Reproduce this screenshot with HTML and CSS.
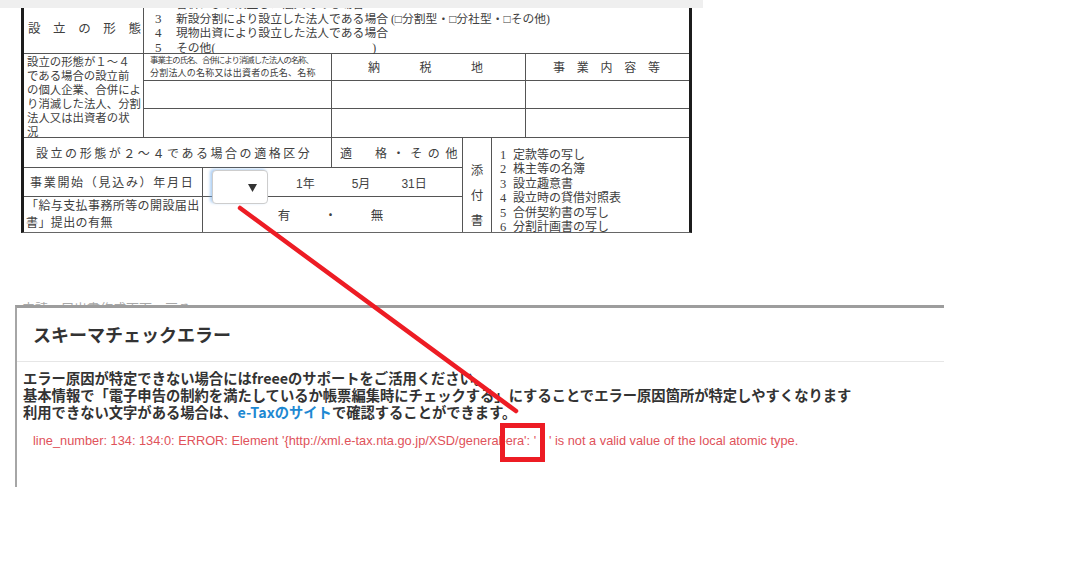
FILE: index.html
```html
<!DOCTYPE html>
<html lang="ja">
<head>
<meta charset="utf-8">
<title>スキーマチェックエラー</title>
<link rel="stylesheet" href="styles.css">
</head>
<body>
<div class="form-shot">
  <div class="strip"></div>
  <div class="form-clip">
    <div class="form">
      <div class="cell r1-label"><span>設</span><span>立</span><span>の</span><span>形</span><span>態</span></div>
      <div class="cell r1-content">
        <div><span class="n">2</span>合併により設立した法人である場合</div>
        <div><span class="n">3</span>新設分割により設立した法人である場合 (□分割型・□分社型・□その他)</div>
        <div><span class="n">4</span>現物出資により設立した法人である場合</div>
        <div><span class="n">5</span>その他(<span class="blank"></span>)</div>
      </div>

      <div class="cell r2-label">設立の形態が１～４<br>である場合の設立前<br>の個人企業、合併によ<br>り消滅した法人、分割<br>法人又は出資者の状<br>況</div>
      <div class="cell r2-h1"><div class="tiny1">事業主の氏名、合併により消滅した法人の名称、</div><div class="tiny2">分割法人の名称又は出資者の氏名、名称</div></div>
      <div class="cell r2-h2"><span>納</span><span>税</span><span>地</span></div>
      <div class="cell r2-h3"><span>事</span><span>業</span><span>内</span><span>容</span><span>等</span></div>
      <div class="cell c23"></div>
      <div class="cell c46"></div>
      <div class="cell c7"></div>
      <div class="cell c23"></div>
      <div class="cell c46"></div>
      <div class="cell c7"></div>

      <div class="cell r3-label">設立の形態が２～４である場合の適格区分</div>
      <div class="cell r3-kubun"><span class="teki">適</span><span class="rest">格・その他</span></div>
      <div class="cell tenpu"><span>添</span><span>付</span><span>書</span></div>
      <div class="cell tenpu-list">
        <div><span class="ln">1</span>定款等の写し</div>
        <div><span class="ln">2</span>株主等の名簿</div>
        <div><span class="ln">3</span>設立趣意書</div>
        <div><span class="ln">4</span>設立時の貸借対照表</div>
        <div><span class="ln">5</span>合併契約書の写し</div>
        <div><span class="ln">6</span>分割計画書の写し</div>
      </div>

      <div class="cell r4-label">事業開始（見込み）年月日</div>
      <div class="cell r4-value">
        <div class="select">
          <svg class="caret" width="9" height="8" viewBox="0 0 9 8"><polygon points="0,0 9,0 4.5,8" fill="#333"/></svg>
        </div>
        <span class="d-year">1年</span><span class="d-month">5月</span><span class="d-day">31日</span>
      </div>

      <div class="cell r5-label">「給与支払事務所等の開設届出<br>書」提出の有無</div>
      <div class="cell r5-value"><span>有</span><span>・</span><span>無</span></div>
    </div>
  </div>
</div>

<div class="ghost">申請・届出書作成画面へ戻る</div>

<div class="dialog">
  <div class="dlg-head">スキーマチェックエラー</div>
  <div class="dlg-body">
    <div>エラー原因が特定できない場合にはfreeeのサポートをご活用ください。</div>
    <div>基本情報で「電子申告の制約を満たしているか帳票編集時にチェックする」にすることでエラー原因箇所が特定しやすくなります</div>
    <div>利用できない文字がある場合は、<span class="link">e-Taxのサイト</span>で確認することができます。</div>
    <div class="err">line_number: 134: 134:0: ERROR: Element '{http://xml.e-tax.nta.go.jp/XSD/general}era': '　' is not a valid value of the local atomic type.</div>
  </div>
</div>

<svg class="annot" width="1076" height="580" viewBox="0 0 1076 580">
  <line x1="240" y1="208" x2="516" y2="411" stroke="#ed1c24" stroke-width="4.5" stroke-linecap="round"/>
  <rect x="502.5" y="425.5" width="40" height="34" fill="none" stroke="#ed1c24" stroke-width="5"/>
</svg>
</body>
</html>
```

FILE: styles.css
```css
* { box-sizing: border-box; }

html, body {
  margin: 0;
  padding: 0;
  background: #fff;
}

body {
  width: 1076px;
  height: 580px;
  overflow: hidden;
  position: relative;
  font-family: "Noto Sans CJK JP", sans-serif;
}

/* ---------- scanned form ---------- */
.form-shot { width: 703px; }

.strip {
  height: 8px;
  background: #efefef;
}

.form-clip {
  height: 225px;
  overflow: hidden;
}

.form {
  margin: -16px 0 0 21px;
  width: 671px;
  display: grid;
  grid-template-columns: 119px 58px 128px 130px 28px 33px 163px;
  grid-template-rows: 61px 26px 27px 28px 29px 28px 35px;
  gap: 1px;
  background: #555;
  border-left: 3px solid #1c1c1c;
  border-right: 3px solid #1c1c1c;
  border-bottom: 1px solid #666;
  font-family: "Liberation Serif", "Noto Sans CJK JP", serif;
  font-size: 12px;
  color: #404040;
}

.cell {
  background: #fff;
  min-width: 0;
}

.r1-label {
  grid-column: 1;
  grid-row: 1;
  display: flex;
  justify-content: space-between;
  align-items: center;
  padding: 10px 2px 0 4px;
  font-size: 12.5px;
}

.r1-content {
  grid-column: 2 / 8;
  grid-row: 1;
  padding: 5px 0 0 11px;
  line-height: 14.5px;
  font-size: 11.8px;
  white-space: nowrap;
}
.n {
  display: inline-block;
  width: 21px;
  font-size: 13px;
}
.blank {
  display: inline-block;
  width: 157px;
}

.r2-label {
  grid-column: 1;
  grid-row: 2 / 5;
  padding: 1px 0 0 3px;
  line-height: 14px;
  font-size: 11.4px;
  white-space: nowrap;
}

.r2-h1 {
  grid-column: 2 / 4;
  grid-row: 2;
  display: flex;
  flex-direction: column;
  justify-content: center;
  padding-left: 6px;
  line-height: 12.5px;
  white-space: nowrap;
}
.tiny1 { font-size: 8.4px; letter-spacing: -0.95px; }
.tiny2 { font-size: 9px; letter-spacing: 0.2px; }

.r2-h2 {
  grid-column: 4 / 7;
  grid-row: 2;
  display: flex;
  justify-content: space-between;
  align-items: center;
  padding: 0 42px 0 36px;
}
.r2-h3 {
  grid-column: 7;
  grid-row: 2;
  display: flex;
  justify-content: space-between;
  align-items: center;
  padding: 0 29px 0 27px;
}

.c23 { grid-column: 2 / 4; }
.c46 { grid-column: 4 / 7; }
.c7 { grid-column: 7; }

.r3-label {
  grid-column: 1 / 4;
  grid-row: 5;
  display: flex;
  align-items: center;
  padding-left: 12px;
  letter-spacing: 2.55px;
  white-space: nowrap;
}
.r3-kubun {
  grid-column: 4;
  grid-row: 5;
  display: flex;
  align-items: center;
  padding-left: 8px;
  white-space: nowrap;
}
.teki { margin-right: 23px; }
.rest { letter-spacing: 5.6px; }

.tenpu {
  grid-column: 5;
  grid-row: 5 / 8;
  display: flex;
  flex-direction: column;
  align-items: center;
  padding-top: 21px;
  line-height: 25px;
  font-size: 12.5px;
}

.tenpu-list {
  grid-column: 6 / 8;
  grid-row: 5 / 8;
  padding: 10px 0 0 8px;
  line-height: 14.4px;
  font-size: 12px;
  white-space: nowrap;
}
.ln {
  display: inline-block;
  width: 13px;
  font-size: 12.5px;
}

.r4-label {
  grid-column: 1 / 3;
  grid-row: 6;
  display: flex;
  align-items: center;
  padding-left: 6px;
  letter-spacing: 1.7px;
  white-space: nowrap;
}
.r4-value {
  grid-column: 3 / 5;
  grid-row: 6;
  position: relative;
  display: flex;
  align-items: center;
  padding-left: 93px;
  font-family: "Liberation Sans", "Noto Sans CJK JP", sans-serif;
  font-size: 12px;
  color: #444;
  white-space: nowrap;
}
.d-month { margin-left: 37px; }
.d-day { margin-left: 31px; }

.select {
  position: absolute;
  left: 9px;
  top: 2px;
  width: 56px;
  height: 34px;
  border: 1px solid #cdcdcd;
  border-radius: 4px;
  background: #fff;
  box-shadow: -2px -1px 3px rgba(110, 170, 235, 0.55);
  display: flex;
  align-items: center;
  justify-content: flex-end;
  padding: 2px 10px 0 0;
}
.caret { display: block; }

.r5-label {
  grid-column: 1 / 3;
  grid-row: 7;
  display: flex;
  align-items: center;
  padding-left: 2px;
  line-height: 17px;
  letter-spacing: 0.4px;
  white-space: nowrap;
}
.r5-value {
  grid-column: 3 / 5;
  grid-row: 7;
  display: flex;
  justify-content: center;
  align-items: center;
  gap: 34px;
  padding-right: 4px;
  font-size: 12.5px;
}

/* ---------- dialog screenshot ---------- */
.ghost {
  height: 7px;
  overflow: hidden;
  margin: 65px 0 0 22px;
  color: #a8a8a8;
  font-size: 13px;
  line-height: 15px;
  padding-top: 2px;
  white-space: nowrap;
}

.dialog {
  margin-left: 15px;
  width: 929px;
  height: 182px;
  border-left: 2px solid #a6a6a6;
  border-top: 3px solid #9d9d9d;
  background: #fff;
}

.dlg-head {
  height: 54px;
  border-bottom: 1px solid #e6e6e6;
  display: flex;
  align-items: center;
  padding: 0 0 1px 16px;
  font-size: 18px;
  font-weight: 700;
  color: #333;
}

.dlg-body {
  padding: 7px 0 0 6px;
  font-size: 14.3px;
  line-height: 17px;
  font-weight: 700;
  color: #333;
  white-space: nowrap;
}

.link { color: #1d88d2; }

.err {
  margin-top: 13px;
  padding-left: 10px;
  font-family: "Liberation Sans", "Noto Sans CJK JP", Arial, sans-serif;
  font-size: 12.8px;
  line-height: 16px;
  font-weight: 400;
  color: #e0525a;
}

/* ---------- annotation overlay ---------- */
.annot {
  position: absolute;
  left: 0;
  top: 0;
  pointer-events: none;
}
```
